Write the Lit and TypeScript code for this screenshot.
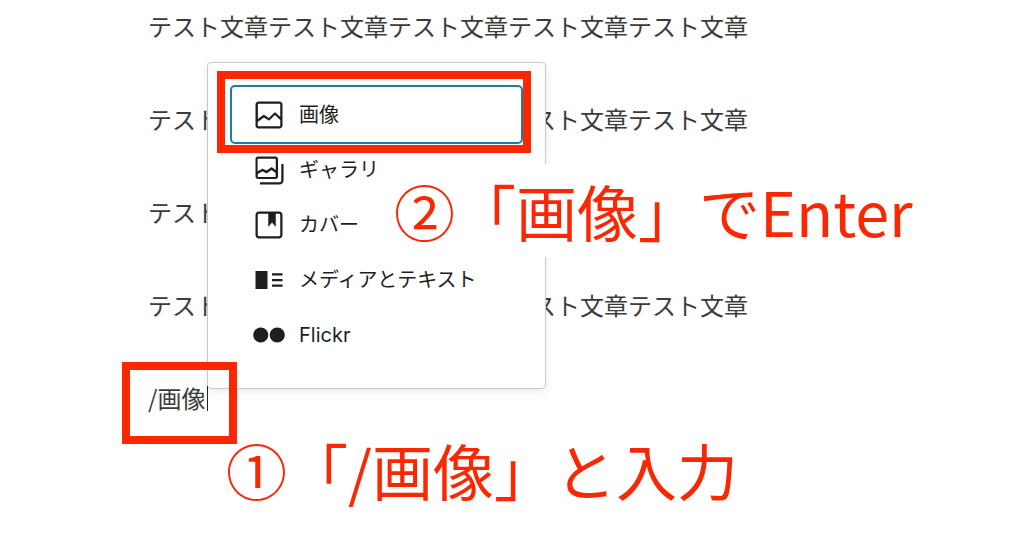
import { LitElement, html, css, svg } from "lit";
import { customElement, state } from "lit/decorators.js";

interface BlockOption {
  label: string;
  icon: string;
}

const OPTIONS: BlockOption[] = [
  {
    label: "画像",
    icon: "M19 3H5c-1.1 0-2 .9-2 2v14c0 1.1.9 2 2 2h14c1.1 0 2-.9 2-2V5c0-1.1-.9-2-2-2zM5 4.5h14c.3 0 .5.2.5.5v8.4l-3-2.9c-.3-.3-.8-.3-1 0L11.9 14 9 12c-.3-.2-.6-.2-.8 0l-3.6 2.6V5c-.1-.3.1-.5.4-.5zm14 15H5c-.3 0-.5-.2-.5-.5v-2.4l4.1-3 3 1.9c.3.2.7.2.9-.1L16 12l3.5 3.4V19c0 .3-.2.5-.5.5z",
  },
  {
    label: "ギャラリー",
    icon: "M20.2 8v11c0 .7-.6 1.2-1.2 1.2H6v1.5h13c1.5 0 2.7-1.2 2.7-2.8V8h-1.5zM18 16.4V4.6c0-.9-.7-1.6-1.6-1.6H4.6C3.7 3 3 3.7 3 4.6v11.8c0 .9.7 1.6 1.6 1.6h11.8c.9 0 1.6-.7 1.6-1.6zM4.5 4.6c0-.1.1-.1.1-.1h11.8c.1 0 .1.1.1.1V12l-2.3-1.7c-.3-.2-.6-.2-.9 0l-2.9 2.1L8 11.3c-.2-.1-.5-.1-.7 0l-2.9 1.5V4.6zm0 11.8v-1.8l3.2-1.7 2.4 1.2c.2.1.5.1.8-.1l2.8-2 2.7 2v2.5c0 .1-.1.1-.1.1H4.6c0-.1-.1-.2-.1-.2z",
  },
  {
    label: "カバー",
    icon: "M18.7 3H5.3C4 3 3 4 3 5.3v13.4C3 20 4 21 5.3 21h13.4c1.3 0 2.3-1 2.3-2.3V5.3C21 4 20 3 18.7 3zm.8 15.7c0 .4-.4.8-.8.8H5.3c-.4 0-.8-.4-.8-.8V5.3c0-.4.4-.8.8-.8h6.2v8.9l2.5-3.1 2.5 3.1V4.5h2.2c.4 0 .8.4.8.8v13.4z",
  },
  {
    label: "メディアとテキスト",
    icon: "M3 18h8V6H3v12zM14 7.5V9h7V7.5h-7zm0 5.3h7v-1.5h-7v1.5zm0 3.7h7V15h-7v1.5z",
  },
  {
    label: "Flickr",
    icon: "M6.5 7c-2.75 0-5 2.25-5 5s2.25 5 5 5 5-2.25 5-5-2.25-5-5-5zm11 0c-2.75 0-5 2.25-5 5s2.25 5 5 5 5-2.25 5-5-2.25-5-5-5z",
  },
];

const PARAGRAPHS: string[] = Array(4).fill("テスト文章".repeat(5));

@customElement("block-menu")
export class BlockMenu extends LitElement {
  @state() private selected = 0;

  static styles = css`
    :host {
      display: block;
      box-sizing: border-box;
      padding: 24px 24px 26px;
      background: #fff;
      border: 1px solid #c8c8c8;
      border-radius: 4px;
      box-shadow: 0 3px 10px rgba(0, 0, 0, 0.08);
    }
    .list {
      display: flex;
      flex-direction: column;
    }
    .option {
      display: flex;
      align-items: center;
      gap: 12px;
      height: 55px;
      padding: 0 19px;
      border: 0;
      border-radius: 3px;
      background: none;
      color: #1e1e1e;
      font: 400 20px/28px Inter, "Noto Sans CJK JP", sans-serif;
      text-align: left;
      white-space: nowrap;
    }
    .option.selected {
      box-shadow: 0 0 0 2px #1b7fa5;
    }
    .icon {
      flex: none;
      width: 36px;
      height: 36px;
      fill: currentColor;
    }
  `;

  render() {
    return html`<div class="list" role="listbox" aria-label="ブロック">
      ${OPTIONS.map(
        (option, i) => html`<button
          type="button"
          role="option"
          class="option ${i === this.selected ? "selected" : ""}"
          aria-selected=${i === this.selected ? "true" : "false"}
          @click=${() => (this.selected = i)}
        >
          <svg class="icon" viewBox="0 0 24 24" aria-hidden="true">
            ${svg`<path d=${option.icon} />`}
          </svg>
          <span>${option.label}</span>
        </button>`
      )}
    </div>`;
  }
}

@customElement("app-root")
export class AppRoot extends LitElement {
  static styles = css`
    :host {
      display: block;
      min-height: 100vh;
      background: #fff;
      color: #3c3c3c;
      font: 400 24px/40px "Noto Sans CJK JP", sans-serif;
    }
    .editor {
      position: relative;
      display: flex;
      flex-direction: column;
      gap: 53px;
      padding: 6px 148px 0;
    }
    .paragraph {
      margin: 0;
      white-space: nowrap;
    }
    .command {
      display: flex;
      align-items: center;
      height: 40px;
    }
    .field {
      box-sizing: border-box;
      width: 59px;
      height: 40px;
      padding: 0;
      border: 0;
      outline: 0;
      background: none;
      color: inherit;
      font: inherit;
    }
    .caret {
      position: relative;
      z-index: 2;
      width: 1px;
      height: 25px;
      background: #222;
    }
    .menu {
      position: absolute;
      z-index: 1;
      top: 62px;
      left: 207px;
      width: 339px;
    }
    .mark {
      position: absolute;
      z-index: 3;
      box-sizing: border-box;
      border: 8px solid #fb2702;
      pointer-events: none;
    }
    .mark-option {
      top: 71px;
      left: 217px;
      width: 314px;
      height: 82px;
    }
    .mark-command {
      top: 362px;
      left: 122px;
      width: 115px;
      height: 82px;
    }
    .note {
      position: absolute;
      z-index: 2;
      margin: 0;
      padding: 0 15px;
      color: #fb2702;
      font-size: 61px;
      line-height: 93px;
      white-space: nowrap;
    }
    .note-enter {
      top: 164px;
      left: 379px;
      background: #fff;
    }
    .note-input {
      top: 423px;
      left: 211px;
    }
  `;

  render() {
    return html`<main class="editor">
      ${PARAGRAPHS.map((text) => html`<p class="paragraph">${text}</p>`)}
      <div class="command">
        <input class="field" type="text" aria-label="ブロックを検索" .value=${"/画像"} />
        <span class="caret"></span>
      </div>
      <block-menu class="menu"></block-menu>
      <div class="mark mark-option"></div>
      <div class="mark mark-command"></div>
      <p class="note note-enter">②「画像」でEnter</p>
      <p class="note note-input">①「/画像」と入力</p>
    </main>`;
  }
}
